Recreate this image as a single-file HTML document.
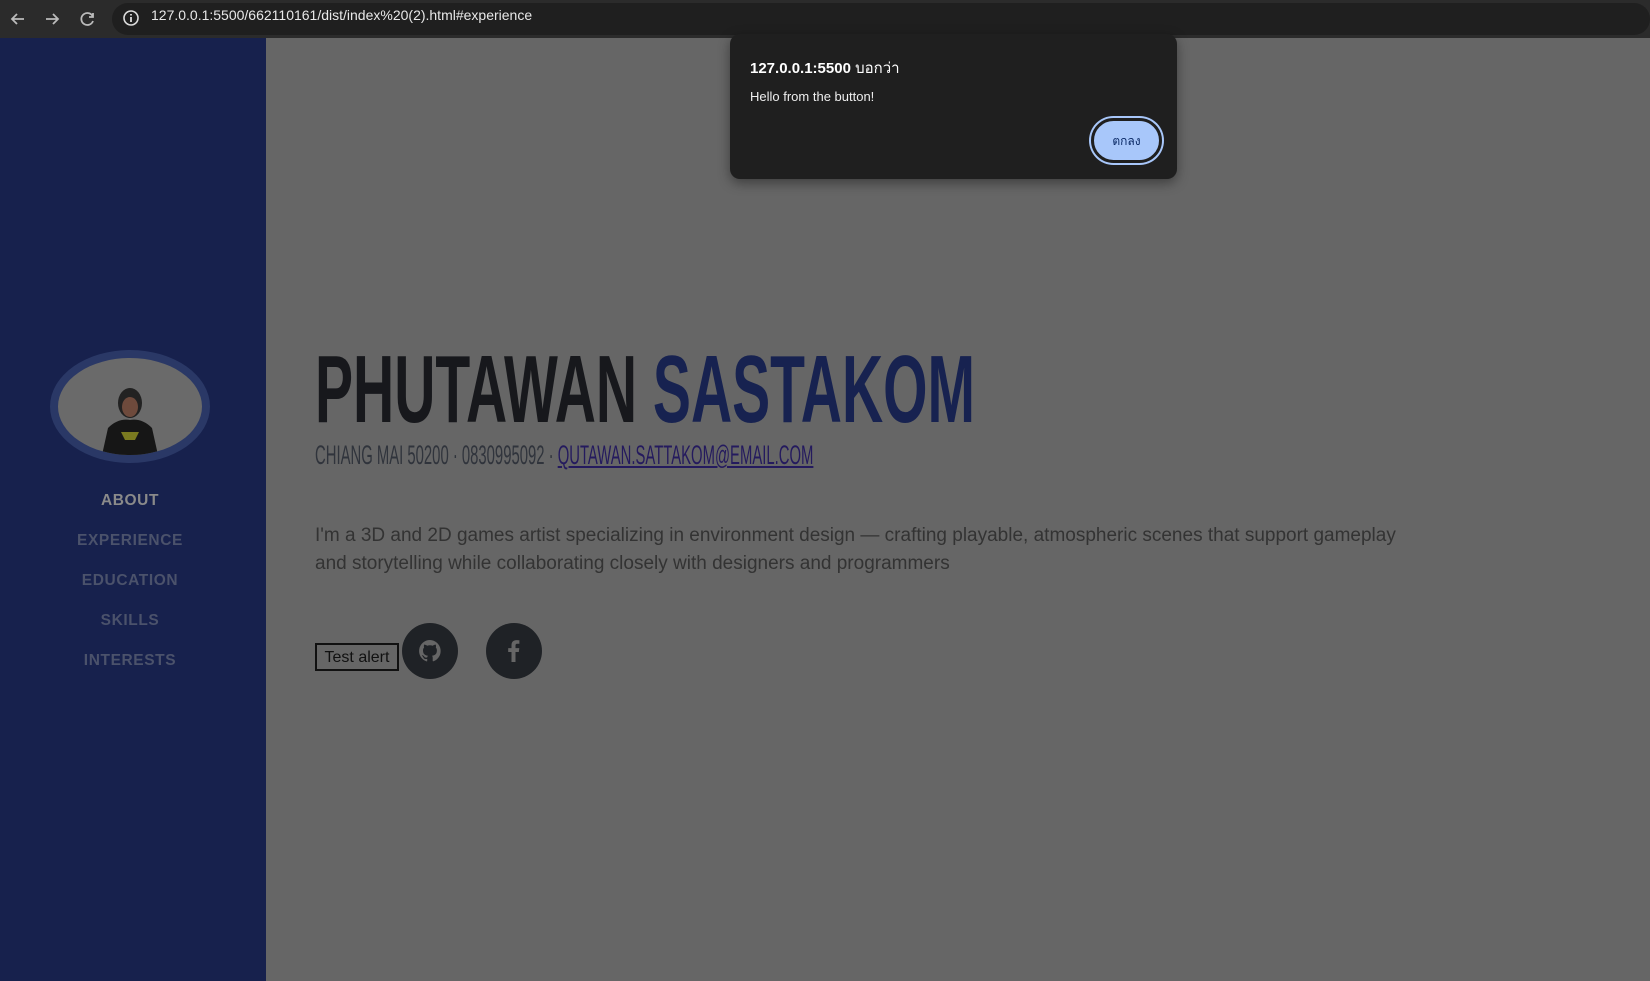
<!DOCTYPE html>
<html><head><meta charset="utf-8"><style>
*{margin:0;padding:0;box-sizing:border-box}
html,body{width:1650px;height:981px;overflow:hidden;background:#666;font-family:"Liberation Sans",sans-serif}
.bar{position:absolute;left:0;top:0;width:1650px;height:38px;background:#2b2b2b}
.pill{position:absolute;left:112px;top:3px;width:1538px;height:32px;background:#1f1f1f;border-radius:16px}
.url{position:absolute;left:151px;top:7px;color:#e8e8e8;font-size:14px}
.side{position:absolute;left:0;top:38px;width:266px;height:943px;background:#17214d}
.av{position:absolute;left:50px;top:350px;width:160px;height:113px;border-radius:50%;background:#2a3866}
.avi{position:absolute;left:58px;top:358px;width:144px;height:97px;border-radius:50%;background:#6a6a6a;overflow:hidden}
.nav{position:absolute;left:0;width:260px;text-align:center;font-weight:bold;font-size:15.5px;letter-spacing:.6px;color:#4b526b}
.main{position:absolute;left:266px;top:38px;width:1384px;height:943px;background:#666}
.name{position:absolute;left:315px;top:340px;font-weight:bold;font-size:96px;line-height:100px;white-space:nowrap;transform:scaleX(.594);transform-origin:left top;color:#17181c}
.sub{position:absolute;left:315px;top:441px;font-size:27px;line-height:28px;white-space:nowrap;transform:scaleX(.55);transform-origin:left top;color:#30343c}
.sub a{color:#241a5e;text-decoration:underline}
.p{position:absolute;left:315px;top:522px;width:1110px;font-size:19px;line-height:28px;color:#333}
.btn{position:absolute;left:315px;top:643px;width:84px;height:28px;border:2px solid #111;font-size:16px;line-height:26px;text-align:center;color:#111;background:#666}
.c{position:absolute;width:56px;height:56px;border-radius:50%;background:#1f2226}
.dlg{position:absolute;left:730px;top:34px;width:447px;height:145px;background:#1f1f1f;border-radius:10px;box-shadow:0 4px 12px rgba(0,0,0,.4)}
.t1{position:absolute;left:20px;top:22px;color:#fff;font-size:15px;font-weight:bold}
.t1 span{font-weight:normal;font-family:"Liberation Sans","Noto Sans CJK SC",sans-serif}
.t2{position:absolute;left:20px;top:55px;color:#eee;font-size:13px}
.ok{position:absolute;left:361px;top:84px;width:71px;height:45px;border-radius:23px;background:#a8c7fa;border:3px solid #1f1f1f;box-shadow:0 0 0 2px #a8c7fa;color:#0b2a66;font-size:12px;text-align:center;line-height:39px;font-family:"Noto Sans CJK SC",sans-serif}
</style></head><body>
<div class="bar">
<svg style="position:absolute;left:8px;top:9px" width="20" height="20" viewBox="0 0 20 20"><path d="M16 10H4M9 5l-5 5 5 5" stroke="#bbb" stroke-width="1.8" fill="none"/></svg>
<svg style="position:absolute;left:42px;top:9px" width="20" height="20" viewBox="0 0 20 20"><path d="M4 10h12M11 5l5 5-5 5" stroke="#bbb" stroke-width="1.8" fill="none"/></svg>
<svg style="position:absolute;left:78px;top:9px" width="20" height="20" viewBox="0 0 20 20"><path d="M15 8a6 6 0 1 0 0 4M15 4v4h-4" stroke="#bbb" stroke-width="1.8" fill="none"/></svg>
<div class="pill"></div>
<svg style="position:absolute;left:121px;top:8px" width="20" height="20" viewBox="0 0 20 20"><circle cx="10" cy="10" r="7" stroke="#ddd" stroke-width="1.6" fill="none"/><path d="M10 9v5M10 6v1.5" stroke="#ddd" stroke-width="1.8"/></svg>
<div class="url">127.0.0.1:5500/662110161/dist/index%20(2).html#experience</div>
</div>
<div class="side"></div>
<div class="av"></div>
<div class="avi"><svg width="144" height="97" viewBox="0 0 144 97"><ellipse cx="72" cy="45" rx="12" ry="15" fill="#222"/><ellipse cx="72" cy="49" rx="8" ry="10" fill="#6e4a3c"/><path d="M44 97 L50 70 Q60 60 72 62 Q84 60 94 70 L100 97Z" fill="#161616"/><path d="M63 74h18l-4 8h-10z" fill="#7a7a20"/></svg></div>
<div class="nav" style="top:492px;color:#8a8a8a">ABOUT</div>
<div class="nav" style="top:532px">EXPERIENCE</div>
<div class="nav" style="top:572px">EDUCATION</div>
<div class="nav" style="top:612px">SKILLS</div>
<div class="nav" style="top:652px">INTERESTS</div>
<div class="main"></div>
<div class="name">PHUTAWAN <span style="color:#172250">SASTAKOM</span></div>
<div class="sub">CHIANG MAI 50200 · 0830995092 · <a>QUTAWAN.SATTAKOM@EMAIL.COM</a></div>
<div class="p">I'm a 3D and 2D games artist specializing in environment design — crafting playable, atmospheric scenes that support gameplay and storytelling while collaborating closely with designers and programmers</div>
<div class="btn">Test alert</div>
<div class="c" style="left:402px;top:623px"><svg width="56" height="56" viewBox="0 0 56 56"><path d="M28 17a11 11 0 0 0-3.5 21.4c.6.1.7-.2.7-.5v-2c-3 .7-3.7-1.3-3.7-1.3-.5-1.2-1.2-1.6-1.2-1.6-1-.7.1-.7.1-.7 1.1.1 1.7 1.1 1.7 1.1 1 1.7 2.6 1.2 3.2.9.1-.7.4-1.2.7-1.5-2.4-.3-5-1.2-5-5.4 0-1.2.4-2.200 1.1-2.9-.1-.3-.5-1.4.1-2.9 0 0 .9-.3 3 1.1a10 10 0 0 1 5.5 0c2.1-1.4 3-1.1 3-1.1.6 1.5.2 2.6.1 2.9.7.8 1.1 1.7 1.1 2.9 0 4.2-2.6 5.1-5 5.400.4.3.8 1 .8 2v3c0 .3.2.6.8.5A11 11 0 0 0 28 17z" fill="#666"/></svg></div>
<div class="c" style="left:486px;top:623px"><svg width="56" height="56" viewBox="0 0 56 56"><path d="M29.5 39V29h3.3l.5-3.9h-3.8v-2.5c0-1.1.3-1.9 1.9-1.9h2V17.3c-.4 0-1.6-.2-3-.2-2.9 0-4.9 1.8-4.9 5.1v2.9h-3.3V29h3.3v10z" fill="#666"/></svg></div>
<div class="dlg">
<div class="t1">127.0.0.1:5500 <span>บอกว่า</span></div>
<div class="t2">Hello from the button!</div>
<div class="ok">ตกลง</div>
</div>
</body></html>
